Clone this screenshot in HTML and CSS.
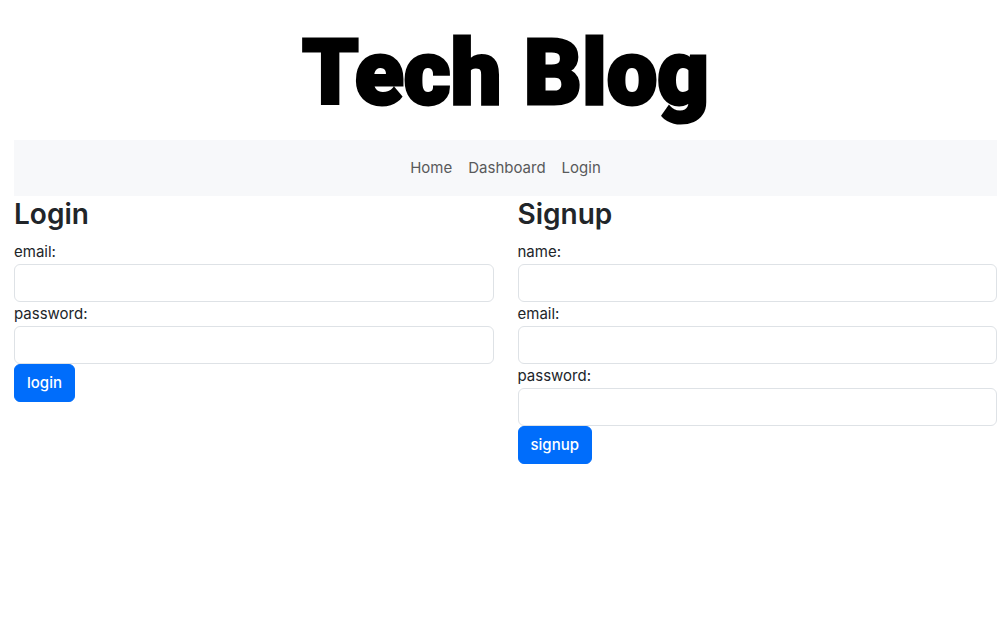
FILE: index.html
```html
<!DOCTYPE html>
<html lang="en">
<head>
<meta charset="utf-8">
<meta name="viewport" content="width=device-width, initial-scale=1">
<title>Tech Blog</title>
<link rel="stylesheet" href="styles.css">
</head>
<body>
<header class="masthead"><h1 class="brand">Tech Blog</h1></header>
<nav class="navbar">
  <a class="nav-link" href="#home">Home</a>
  <a class="nav-link" href="#dashboard">Dashboard</a>
  <a class="nav-link" href="#login">Login</a>
</nav>
<main class="forms">
  <form class="auth-form" id="login">
    <h2 class="form-title">Login</h2>
    <label for="email-login">email:</label>
    <input class="form-input" type="text" id="email-login">
    <label for="password-login">password:</label>
    <input class="form-input" type="password" id="password-login">
    <button class="btn" type="submit">login</button>
  </form>
  <form class="auth-form" id="signup">
    <h2 class="form-title">Signup</h2>
    <label for="name-signup">name:</label>
    <input class="form-input" type="text" id="name-signup">
    <label for="email-signup">email:</label>
    <input class="form-input" type="text" id="email-signup">
    <label for="password-signup">password:</label>
    <input class="form-input" type="password" id="password-signup">
    <button class="btn" type="submit">signup</button>
  </form>
</main>
</body>
</html>
```
FILE: styles.css
```css
* {
  box-sizing: border-box;
}

body {
  margin: 0;
  padding: 0 10px 0 14px;
  background: #fff;
  color: #212529;
  font: 400 15px/24px Inter, "Liberation Sans", sans-serif;
}

.masthead {
  padding: 14px 0 6px;
  text-align: center;
}

.brand {
  margin: 0;
  color: #000;
  font: 900 90px/120px Roboto, sans-serif;
  -webkit-text-stroke: 3px #000;
}

.navbar {
  display: flex;
  justify-content: center;
  gap: 16px;
  padding: 16px;
  background: #f7f8fa;
}

.nav-link {
  color: #595a5b;
  text-decoration: none;
}

.forms {
  display: grid;
  grid-template-columns: 1fr 1fr;
  gap: 24px;
  align-items: start;
}

.auth-form {
  display: flex;
  flex-direction: column;
  align-items: flex-start;
}

.form-title {
  margin: 0 0 8px;
  font-size: 28px;
  line-height: 36px;
  font-weight: 600;
}

.form-input {
  width: 100%;
  height: 38px;
  padding: 6px 12px;
  border: 1px solid #dee2e6;
  border-radius: 6px;
  background: #fff;
  color: inherit;
  font: inherit;
}

.btn {
  padding: 6px 12px;
  border: 1px solid #006dfb;
  border-radius: 6px;
  background: #006dfb;
  color: #fff;
  font: inherit;
  font-weight: 500;
  cursor: pointer;
}
```
